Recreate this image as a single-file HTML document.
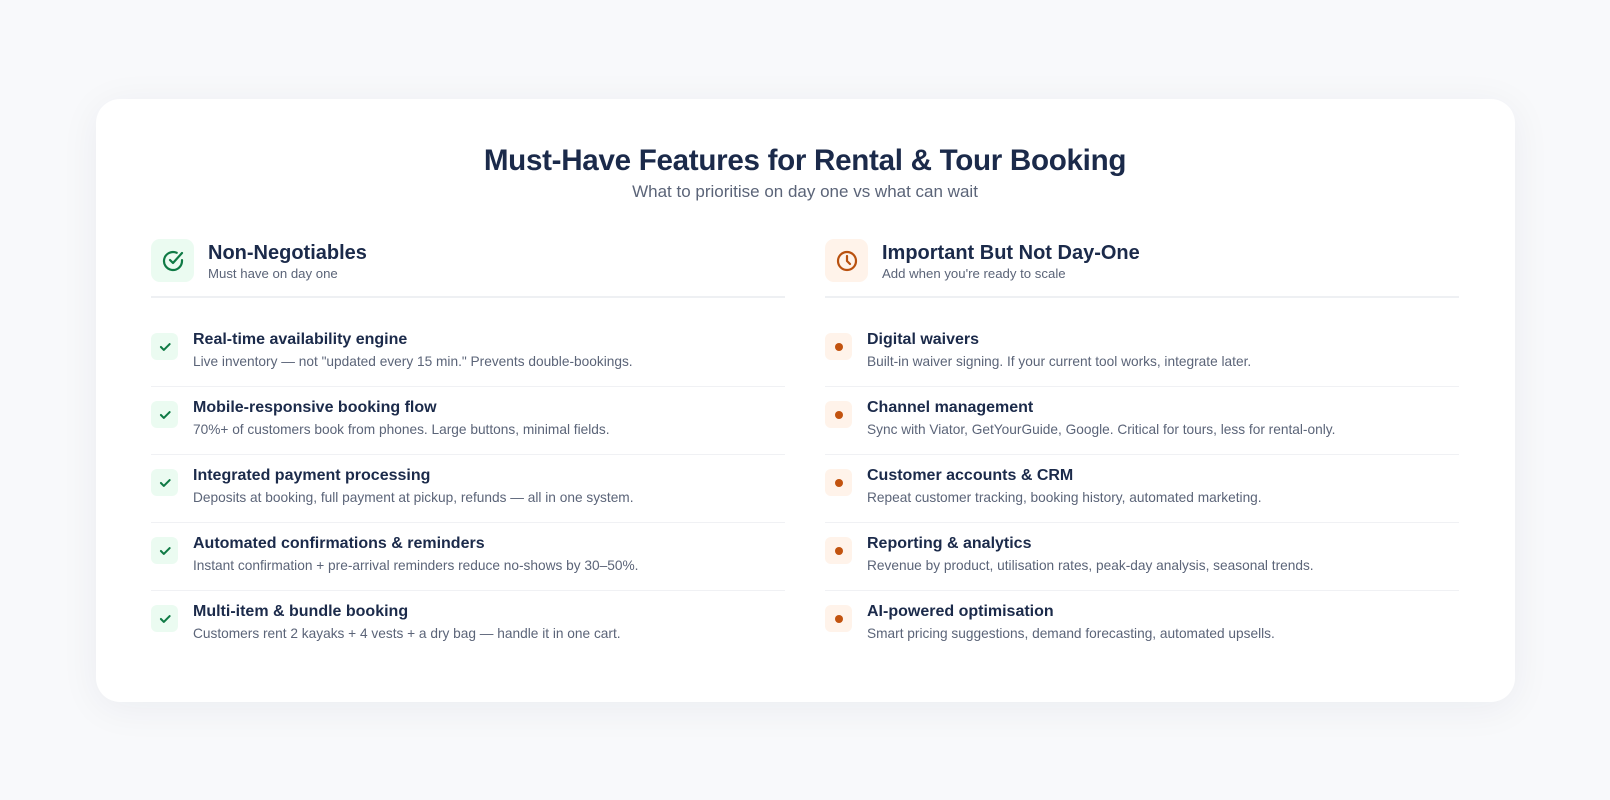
<!DOCTYPE html>
<html><head><meta charset="utf-8"><style>
*{margin:0;padding:0;box-sizing:border-box}
body{width:1610px;height:800px;background:#f8f9fb;font-family:"Liberation Sans",sans-serif;position:relative;overflow:hidden}
.card{position:absolute;left:96px;top:99px;width:1419px;height:603px;background:#fff;border-radius:24px;box-shadow:0 6px 40px rgba(20,30,60,.06)}
h1{position:absolute;left:0;right:0;top:144px;text-align:center;font-size:29.6px;font-weight:700;color:#1b2a4a;letter-spacing:-.3px}
.sub{position:absolute;left:0;right:0;top:182px;text-align:center;font-size:17px;color:#5b6478}
.col{position:absolute;top:239px;width:634px}
.hd{height:59px;border-bottom:2px solid #eef0f3;position:relative}
.hi{position:absolute;left:0;top:0;width:43px;height:43px;border-radius:9px;display:flex;align-items:center;justify-content:center}
.ht{position:absolute;left:57px;top:3px;font-size:20px;font-weight:700;color:#1b2a4a}
.hs{position:absolute;left:57px;top:27px;font-size:13.2px;color:#5b6478}
.row{height:68px;border-bottom:1px solid #f0f1f4;position:relative}
.row:last-child{border-bottom:none}
.list{margin-top:21px}
.ii{position:absolute;left:0;top:14px;width:27px;height:27px;border-radius:6px;display:flex;align-items:center;justify-content:center}
.t{position:absolute;left:42px;top:12px;font-size:16px;font-weight:700;color:#1b2a4a}
.d{position:absolute;left:42px;top:35px;font-size:13.7px;color:#5b6478}
.g{background:#ebfbf1}.o{background:#fff3ea}
.dot{width:8px;height:8px;border-radius:50%;background:#c2530f}
</style></head><body>
<div class="card"></div>
<h1>Must-Have Features for Rental &amp; Tour Booking</h1>
<div class="sub">What to prioritise on day one vs what can wait</div>

<div class="col" style="left:151px">
<div class="hd"><div class="hi g"><svg width="24" height="24" viewBox="0 0 24 24" fill="none" stroke="#0f7a45" stroke-width="2.2" stroke-linecap="round" stroke-linejoin="round"><path d="M21 11.1V12a9 9 0 1 1-5.3-8.2"/><path d="M9 11l3 3L21 4"/></svg></div><div class="ht">Non-Negotiables</div><div class="hs">Must have on day one</div></div>
<div class="list">
<div class="row"><div class="ii g"><svg width="14" height="14" viewBox="0 0 24 24" fill="none" stroke="#0f7a45" stroke-width="3.5" stroke-linecap="round" stroke-linejoin="round"><path d="M5 12l5 5L20 7"/></svg></div><div class="t">Real-time availability engine</div><div class="d">Live inventory — not "updated every 15 min." Prevents double-bookings.</div></div>
<div class="row"><div class="ii g"><svg width="14" height="14" viewBox="0 0 24 24" fill="none" stroke="#0f7a45" stroke-width="3.5" stroke-linecap="round" stroke-linejoin="round"><path d="M5 12l5 5L20 7"/></svg></div><div class="t">Mobile-responsive booking flow</div><div class="d">70%+ of customers book from phones. Large buttons, minimal fields.</div></div>
<div class="row"><div class="ii g"><svg width="14" height="14" viewBox="0 0 24 24" fill="none" stroke="#0f7a45" stroke-width="3.5" stroke-linecap="round" stroke-linejoin="round"><path d="M5 12l5 5L20 7"/></svg></div><div class="t">Integrated payment processing</div><div class="d">Deposits at booking, full payment at pickup, refunds — all in one system.</div></div>
<div class="row"><div class="ii g"><svg width="14" height="14" viewBox="0 0 24 24" fill="none" stroke="#0f7a45" stroke-width="3.5" stroke-linecap="round" stroke-linejoin="round"><path d="M5 12l5 5L20 7"/></svg></div><div class="t">Automated confirmations &amp; reminders</div><div class="d">Instant confirmation + pre-arrival reminders reduce no-shows by 30–50%.</div></div>
<div class="row"><div class="ii g"><svg width="14" height="14" viewBox="0 0 24 24" fill="none" stroke="#0f7a45" stroke-width="3.5" stroke-linecap="round" stroke-linejoin="round"><path d="M5 12l5 5L20 7"/></svg></div><div class="t">Multi-item &amp; bundle booking</div><div class="d">Customers rent 2 kayaks + 4 vests + a dry bag — handle it in one cart.</div></div>
</div></div>

<div class="col" style="left:825px">
<div class="hd"><div class="hi o"><svg width="24" height="24" viewBox="0 0 24 24" fill="none" stroke="#b9510f" stroke-width="2.2" stroke-linecap="round" stroke-linejoin="round"><circle cx="12" cy="12" r="9"/><path d="M12 7v5l3 3"/></svg></div><div class="ht">Important But Not Day-One</div><div class="hs">Add when you're ready to scale</div></div>
<div class="list">
<div class="row"><div class="ii o"><div class="dot"></div></div><div class="t">Digital waivers</div><div class="d">Built-in waiver signing. If your current tool works, integrate later.</div></div>
<div class="row"><div class="ii o"><div class="dot"></div></div><div class="t">Channel management</div><div class="d">Sync with Viator, GetYourGuide, Google. Critical for tours, less for rental-only.</div></div>
<div class="row"><div class="ii o"><div class="dot"></div></div><div class="t">Customer accounts &amp; CRM</div><div class="d">Repeat customer tracking, booking history, automated marketing.</div></div>
<div class="row"><div class="ii o"><div class="dot"></div></div><div class="t">Reporting &amp; analytics</div><div class="d">Revenue by product, utilisation rates, peak-day analysis, seasonal trends.</div></div>
<div class="row"><div class="ii o"><div class="dot"></div></div><div class="t">AI-powered optimisation</div><div class="d">Smart pricing suggestions, demand forecasting, automated upsells.</div></div>
</div></div>
</body></html>
